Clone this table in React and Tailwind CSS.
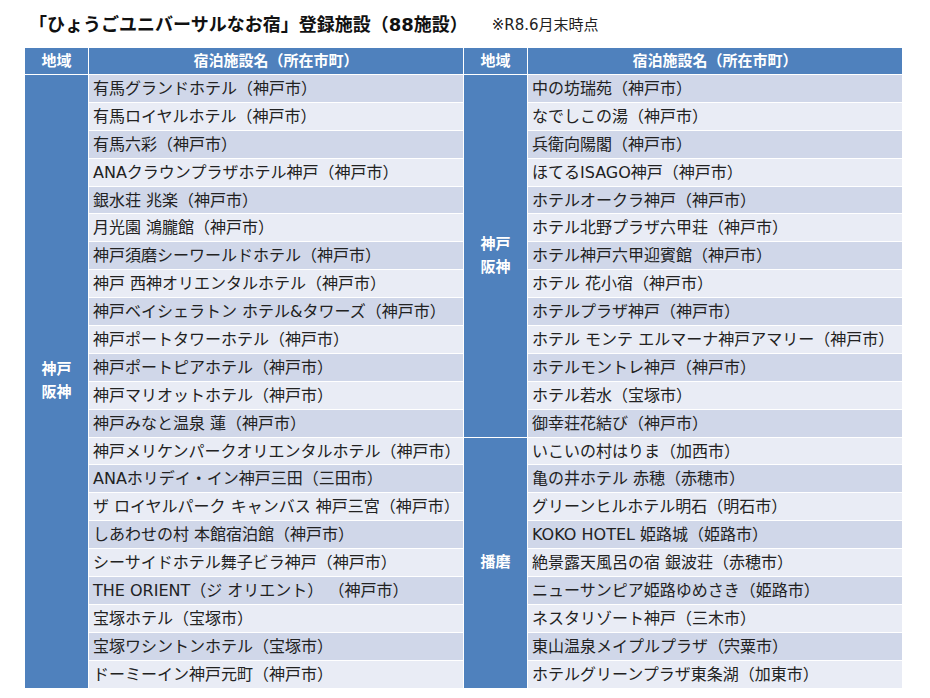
const LEFT = [
  '有馬グランドホテル（神戸市）',
  '有馬ロイヤルホテル（神戸市）',
  '有馬六彩（神戸市）',
  'ANAクラウンプラザホテル神戸（神戸市）',
  '銀水荘 兆楽（神戸市）',
  '月光園 鴻朧館（神戸市）',
  '神戸須磨シーワールドホテル（神戸市）',
  '神戸 西神オリエンタルホテル（神戸市）',
  '神戸ベイシェラトン ホテル&タワーズ（神戸市）',
  '神戸ポートタワーホテル（神戸市）',
  '神戸ポートピアホテル（神戸市）',
  '神戸マリオットホテル（神戸市）',
  '神戸みなと温泉 蓮（神戸市）',
  '神戸メリケンパークオリエンタルホテル（神戸市）',
  'ANAホリデイ・イン神戸三田（三田市）',
  'ザ ロイヤルパーク キャンバス 神戸三宮（神戸市）',
  'しあわせの村 本館宿泊館（神戸市）',
  'シーサイドホテル舞子ビラ神戸（神戸市）',
  'THE ORIENT（ジ オリエント） （神戸市）',
  '宝塚ホテル（宝塚市）',
  '宝塚ワシントンホテル（宝塚市）',
  'ドーミーイン神戸元町（神戸市）',
];

const RIGHT = [
  '中の坊瑞苑（神戸市）',
  'なでしこの湯（神戸市）',
  '兵衛向陽閣（神戸市）',
  'ほてるISAGO神戸（神戸市）',
  'ホテルオークラ神戸（神戸市）',
  'ホテル北野プラザ六甲荘（神戸市）',
  'ホテル神戸六甲迎賓館（神戸市）',
  'ホテル 花小宿（神戸市）',
  'ホテルプラザ神戸（神戸市）',
  'ホテル モンテ エルマーナ神戸アマリー（神戸市）',
  'ホテルモントレ神戸（神戸市）',
  'ホテル若水（宝塚市）',
  '御幸荘花結び（神戸市）',
  'いこいの村はりま（加西市）',
  '亀の井ホテル 赤穂（赤穂市）',
  'グリーンヒルホテル明石（明石市）',
  'KOKO HOTEL 姫路城（姫路市）',
  '絶景露天風呂の宿 銀波荘（赤穂市）',
  'ニューサンピア姫路ゆめさき（姫路市）',
  'ネスタリゾート神戸（三木市）',
  '東山温泉メイプルプラザ（宍粟市）',
  'ホテルグリーンプラザ東条湖（加東市）',
];

function Region({ span, children }) {
  const spans = { 22: 'row-span-22', 13: 'row-span-13', 9: 'row-span-9' };
  return (
    <div className={`${spans[span]} bg-[#4f81bd] flex items-center justify-center text-white font-bold text-[15px] leading-[23px] text-center`}>
      {children}
    </div>
  );
}

function Name({ i, children }) {
  return (
    <div className={`${i % 2 === 0 ? 'bg-[#d0d7e9]' : 'bg-[#e9ecf5]'} flex items-center pl-[4px] pt-[1px] text-[16px] text-[#222] whitespace-nowrap overflow-hidden`}>
      {children}
    </div>
  );
}

export default function App() {
  const cells = [];
  LEFT.forEach((name, i) => {
    if (i === 0) cells.push(<Region key="lr" span={22}>神戸<br />阪神</Region>);
    cells.push(<Name key={'l' + i} i={i}>{name}</Name>);
    if (i === 0) cells.push(<Region key="rr1" span={13}>神戸<br />阪神</Region>);
    if (i === 13) cells.push(<Region key="rr2" span={9}>播磨</Region>);
    cells.push(<Name key={'r' + i} i={i}>{RIGHT[i]}</Name>);
  });

  return (
    <div className="w-[930px] h-[698px] bg-white font-['DejaVu_Sans','Noto_Sans_CJK_JP',sans-serif] overflow-hidden">
      <div className="h-[48px] flex items-center pl-[29px] pt-[1px]">
        <span className="text-[18px] font-bold text-[#111]">「ひょうごユニバーサルなお宿」登録施設（88施設）</span>
        <span className="ml-[24px] text-[15px] text-[#222] mt-[2px]">※R8.6月末時点</span>
      </div>
      <div className="ml-[25px] w-[877px] grid grid-cols-[63px_374px_63px_374px] grid-rows-[26px_repeat(22,26.9px)] gap-[1px] bg-white">
        <div className="bg-[#4f81bd] text-white font-bold text-[15px] flex items-center justify-center">地域</div>
        <div className="bg-[#4f81bd] text-white font-bold text-[15px] flex items-center justify-center">宿泊施設名（所在市町）</div>
        <div className="bg-[#4f81bd] text-white font-bold text-[15px] flex items-center justify-center">地域</div>
        <div className="bg-[#4f81bd] text-white font-bold text-[15px] flex items-center justify-center">宿泊施設名（所在市町）</div>
        {cells}
      </div>
    </div>
  );
}
